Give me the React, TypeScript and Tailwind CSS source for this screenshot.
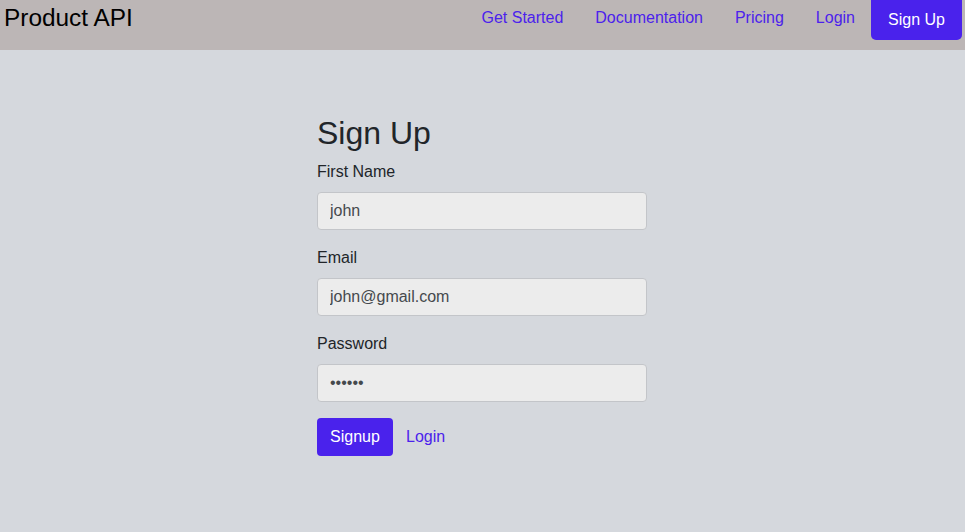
import React from "react";

const font = { fontFamily: '"Liberation Sans", Arial, sans-serif' };

function Field({ label, type, value }: { label: string; type: string; value: string }) {
  return (
    <div className="mb-4">
      <label className="mb-2 block text-base leading-6 text-[#212529]">{label}</label>
      <input
        type={type}
        defaultValue={value}
        className="block h-[38px] w-full rounded border border-[#c3c5c9] bg-[#ececec] px-3 text-base text-[#45494d] outline-none"
      />
    </div>
  );
}

export default function App() {
  return (
    <div className="min-h-[532px] bg-[#d5d8dd]" style={font}>
      {/* Header */}
      <header className="flex h-[50px] items-start justify-between bg-[#bcb6b6] pl-1 pr-[3px]">
        <a className="text-[24.4px] leading-9 text-black">Product API</a>
        <nav className="flex items-start">
          {["Get Started", "Documentation", "Pricing", "Login"].map((l) => (
            <a key={l} className="px-4 pt-1.5 text-base leading-6 text-[#4b22ec]">
              {l}
            </a>
          ))}
          <button className="w-[91px] rounded-b-[5px] bg-[#4a22ec] py-2 text-base leading-6 text-white">
            Sign Up
          </button>
        </nav>
      </header>

      {/* Form */}
      <main className="flex justify-center pr-px">
        <div className="mt-16 w-[330px]">
          <h1 className="mb-2 text-[32px] leading-[38px] text-[#212529]">Sign Up</h1>
          <Field label="First Name" type="text" value="john" />
          <Field label="Email" type="email" value="john@gmail.com" />
          <Field label="Password" type="password" value="secret" />
          <div className="flex items-center gap-[13px]">
            <button className="h-[38px] w-[76px] rounded bg-[#4a22ec] text-base text-white">Signup</button>
            <a className="text-base text-[#4b22ec]">Login</a>
          </div>
        </div>
      </main>
    </div>
  );
}
